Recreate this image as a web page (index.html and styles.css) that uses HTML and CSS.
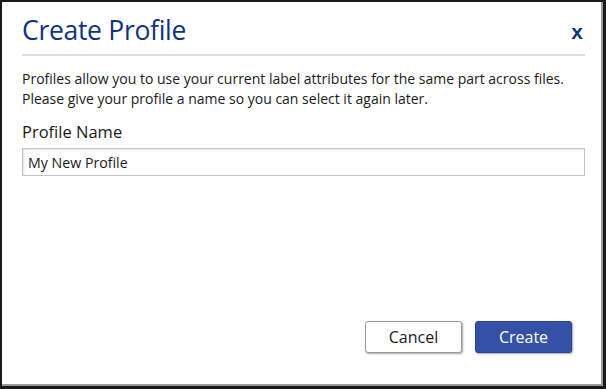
FILE: index.html
```html
<!DOCTYPE html>
<html lang="en">
<head>
    <meta charset="UTF-8">
    <meta name="viewport" content="width=device-width, initial-scale=1.0">
    <title>Create Profile</title>
    <link rel="stylesheet" href="styles.css">
</head>
<body>
    <div class="dialog">
        <div class="dialog-header">
            <h1 class="dialog-title">Create Profile</h1>
            <span class="dialog-close">x</span>
        </div>

        <p class="dialog-text">
            Profiles allow you to use your current label attributes for the same part across files.<br>
            Please give your profile a name so you can select it again later.
        </p>

        <label class="field-label" for="profileName">Profile Name</label>
        <input class="field-input" id="profileName" type="text" value="My New Profile">

        <div class="dialog-actions">
            <button class="btn btn-cancel">Cancel</button>
            <button class="btn btn-create">Create</button>
        </div>
    </div>
</body>
</html>
```

FILE: styles.css
```css
html, body {
    margin: 0;
    padding: 0;
    height: 100%;
}

body {
    font-family: 'Open Sans', 'Liberation Sans', sans-serif;
    color: #1a1a1a;
    background: #fff;
}

.dialog {
    box-sizing: border-box;
    height: 389px;
    width: 606px;
    border: 2px solid #1a1a1a;
    border-right-width: 3px;
    border-bottom-width: 3px;
    box-shadow: inset -2px -2px 0 #9a9a9a;
    padding: 0 18px 0 20px;
    display: flex;
    flex-direction: column;
}

.dialog-header {
    display: flex;
    justify-content: space-between;
    align-items: flex-end;
    border-bottom: 2px solid #dedede;
    height: 54px;
    box-sizing: border-box;
    padding-bottom: 8px;
}

.dialog-title {
    margin: 0;
    font-weight: normal;
    font-size: 26.5px;
    line-height: 32px;
    color: #0f3380;
    letter-spacing: -0.3px;
}

.dialog-close {
    font-family: 'Liberation Sans', sans-serif;
    font-weight: bold;
    font-size: 21px;
    line-height: 20px;
    color: #0f3380;
    margin-right: 2px;
    margin-bottom: 4px;
}

.dialog-text {
    margin: 13px 0 0 0;
    font-size: 14px;
    line-height: 20px;
}

.field-label {
    display: block;
    margin-top: 12px;
    font-size: 16.5px;
    line-height: 22px;
}

.field-input {
    margin-top: 5px;
    height: 28px;
    box-sizing: border-box;
    border: 1px solid #c4c4c4;
    box-shadow: inset 1px 1px 2px #e2e2e2;
    padding: 0 5px;
    font-family: 'Open Sans', 'Liberation Sans', sans-serif;
    font-size: 14.2px;
    color: #1a1a1a;
    width: 100%;
}

.dialog-actions {
    margin-top: auto;
    margin-bottom: 33px;
    display: flex;
    justify-content: flex-end;
    gap: 13px;
    padding-right: 13px;
}

.btn {
    width: 97px;
    height: 32px;
    border-radius: 3px;
    font-family: 'Open Sans', 'Liberation Sans', sans-serif;
    font-size: 16px;
    box-shadow: 1px 1px 2px rgba(0, 0, 0, 0.35);
}

.btn-cancel {
    background: #fff;
    border: 1px solid #999;
    color: #1a1a1a;
}

.btn-create {
    background: #3451a7;
    border: 1px solid #2b4390;
    color: #fff;
}
```
